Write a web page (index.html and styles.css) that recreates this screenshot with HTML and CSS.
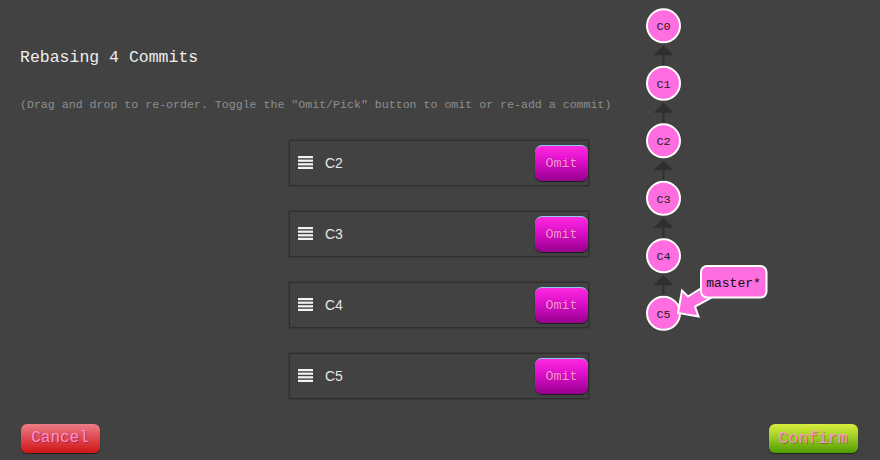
FILE: index.html
```html
<!DOCTYPE html>
<html>
<head>
<meta charset="utf-8">
<link rel="stylesheet" href="styles.css">
</head>
<body>
<div class="page">
  <h1 class="title">Rebasing 4 Commits</h1>
  <p class="hint">(Drag and drop to re-order. Toggle the "Omit/Pick" button to omit or re-add a commit)</p>
  <ul class="commits">
    <li class="commit">
      <svg class="handle" width="15" height="13" viewBox="0 0 15 13"><rect x="0" y="0" width="15" height="2.2"/><rect x="0" y="3.6" width="15" height="2.2"/><rect x="0" y="7.2" width="15" height="2.2"/><rect x="0" y="10.8" width="15" height="2.2"/></svg>
      <span class="label">C2</span>
      <button class="omit">Omit</button>
    </li>
    <li class="commit">
      <svg class="handle" width="15" height="13" viewBox="0 0 15 13"><rect x="0" y="0" width="15" height="2.2"/><rect x="0" y="3.6" width="15" height="2.2"/><rect x="0" y="7.2" width="15" height="2.2"/><rect x="0" y="10.8" width="15" height="2.2"/></svg>
      <span class="label">C3</span>
      <button class="omit">Omit</button>
    </li>
    <li class="commit">
      <svg class="handle" width="15" height="13" viewBox="0 0 15 13"><rect x="0" y="0" width="15" height="2.2"/><rect x="0" y="3.6" width="15" height="2.2"/><rect x="0" y="7.2" width="15" height="2.2"/><rect x="0" y="10.8" width="15" height="2.2"/></svg>
      <span class="label">C4</span>
      <button class="omit">Omit</button>
    </li>
    <li class="commit">
      <svg class="handle" width="15" height="13" viewBox="0 0 15 13"><rect x="0" y="0" width="15" height="2.2"/><rect x="0" y="3.6" width="15" height="2.2"/><rect x="0" y="7.2" width="15" height="2.2"/><rect x="0" y="10.8" width="15" height="2.2"/></svg>
      <span class="label">C5</span>
      <button class="omit">Omit</button>
    </li>
  </ul>
  <div class="footer">
    <button class="btn cancel">Cancel</button>
    <button class="btn confirm">Confirm</button>
  </div>
</div>

<svg class="graph" width="160" height="340" viewBox="630 0 160 340">
  <g class="edges">
    <path d="M663.5 45.3 L673.5 55.3 L653.5 55.3 Z"/><rect x="662.5" y="55" width="2" height="11"/>
    <path d="M663.5 102.8 L673.5 112.8 L653.5 112.8 Z"/><rect x="662.5" y="112.5" width="2" height="11"/>
    <path d="M663.5 160.3 L673.5 170.3 L653.5 170.3 Z"/><rect x="662.5" y="170" width="2" height="11"/>
    <path d="M663.5 217.8 L673.5 227.8 L653.5 227.8 Z"/><rect x="662.5" y="227.5" width="2" height="11"/>
    <path d="M663.5 275.3 L673.5 285.3 L653.5 285.3 Z"/><rect x="662.5" y="285" width="2" height="11"/>
  </g>
  <g class="nodes">
    <circle cx="663.5" cy="25.8" r="16.5"/>
    <circle cx="663.5" cy="83.3" r="16.5"/>
    <circle cx="663.5" cy="140.8" r="16.5"/>
    <circle cx="663.5" cy="198.3" r="16.5"/>
    <circle cx="663.5" cy="255.8" r="16.5"/>
    <circle cx="663.5" cy="313.3" r="16.5"/>
  </g>
  <g class="node-labels">
    <text x="663.5" y="30">C0</text>
    <text x="663.5" y="87.5">C1</text>
    <text x="663.5" y="145">C2</text>
    <text x="663.5" y="202.5">C3</text>
    <text x="663.5" y="260">C4</text>
    <text x="663.5" y="317.5">C5</text>
  </g>
  <polygon class="branch-arrow" points="678,313 682,290.5 688,296.5 703,287 711,298 695,306.5 698.5,316.5"/>
  <rect class="branch-box" x="701" y="266" width="65.5" height="31.5" rx="6"/>
  <text class="branch-text" x="733.5" y="286.5">master*</text>
</svg>
</body>
</html>
```

FILE: styles.css
```css
* {
  box-sizing: border-box;
}

html, body {
  margin: 0;
  padding: 0;
}

body {
  background: #424242;
  width: 880px;
  height: 460px;
  overflow: hidden;
  position: relative;
  font-family: "Liberation Mono", "Courier New", monospace;
}

.page {
  display: flex;
  flex-direction: column;
  padding-top: 47.6px;
}

.title {
  margin: 0 0 0 20px;
  font-size: 16.5px;
  line-height: 20px;
  font-weight: normal;
  color: #eeeeee;
}

.hint {
  margin: 30.4px 0 0 20px;
  font-size: 11.6px;
  line-height: 14px;
  color: #8e8e8e;
}

.commits {
  list-style: none;
  margin: 28px 0 0 0;
  padding: 0;
  display: flex;
  flex-direction: column;
  align-items: center;
  gap: 25px;
}

.commit {
  width: 300px;
  height: 46px;
  margin-left: -2px;
  border: 1px solid #2f2f2f;
  box-shadow: 0 0 2px rgba(0, 0, 0, 0.35);
  background: #424242;
  display: flex;
  align-items: center;
  padding-left: 8px;
}

.handle {
  fill: #f2f2f2;
  display: block;
  margin-top: -1px;
}

.label {
  margin-left: 12px;
  font-family: "Liberation Sans", Arial, sans-serif;
  font-size: 14px;
  color: #e6e6e6;
  flex: 1;
}

.omit {
  width: 53px;
  height: 36px;
  margin-top: 1px;
  border: none;
  border-top: 1px solid #8fc7ef;
  border-radius: 7px;
  background: linear-gradient(#ff2ae0, #e010cc 40%, #98008f);
  box-shadow: 0 1px 1px rgba(0, 0, 0, 0.6);
  color: #ff95d6;
  font-family: "Liberation Mono", "Courier New", monospace;
  font-size: 13.4px;
  padding: 0;
  text-shadow: 0 0 1px rgba(90, 0, 80, 0.5);
}

.footer {
  display: flex;
  justify-content: space-between;
  align-items: flex-start;
  margin-top: 25px;
  padding: 0 22.5px 0 20.5px;
}

.btn {
  height: 29px;
  border: none;
  border-radius: 6px;
  padding: 0;
  font-family: "Liberation Mono", "Courier New", monospace;
  font-size: 16px;
  color: #ff8fd2;
  text-shadow: 1px 1px 0 rgba(80, 0, 30, 0.35);
  box-shadow: 0 1px 1px rgba(0, 0, 0, 0.5);
}

.cancel {
  width: 79px;
  background: linear-gradient(#ec7d86, #df4c55 45%, #cf1515);
}

.confirm {
  width: 89px;
  font-size: 16.5px;
  background: linear-gradient(#d9ec3c, #a6d12a 40%, #4f9b00);
}

.graph {
  position: absolute;
  left: 630px;
  top: 0;
  display: block;
}

.edges {
  fill: #2f2f2f;
}

.nodes circle {
  fill: #ff6ee0;
  stroke: #ffffff;
  stroke-width: 2;
}

.node-labels text {
  font-family: "Liberation Mono", "Courier New", monospace;
  font-size: 11.8px;
  fill: #222222;
  text-anchor: middle;
}

.branch-arrow {
  fill: #ff6ee0;
  stroke: #ffffff;
  stroke-width: 2;
  stroke-linejoin: miter;
}

.branch-box {
  fill: #ff6ee0;
  stroke: #ffffff;
  stroke-width: 2;
}

.branch-text {
  font-family: "Liberation Mono", "Courier New", monospace;
  font-size: 13px;
  fill: #111111;
  text-anchor: middle;
}
```
